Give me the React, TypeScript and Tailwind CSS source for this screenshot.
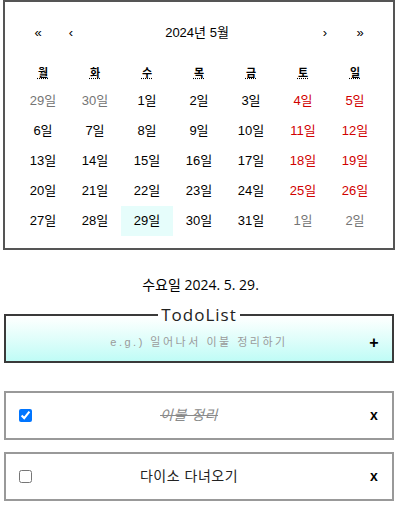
import React from "react";

const weeks: { d: string; c: "g" | "b" | "r" }[][] = [
  [
    { d: "29일", c: "g" }, { d: "30일", c: "g" }, { d: "1일", c: "b" }, { d: "2일", c: "b" }, { d: "3일", c: "b" }, { d: "4일", c: "r" }, { d: "5일", c: "r" },
  ],
  [
    { d: "6일", c: "b" }, { d: "7일", c: "b" }, { d: "8일", c: "b" }, { d: "9일", c: "b" }, { d: "10일", c: "b" }, { d: "11일", c: "r" }, { d: "12일", c: "r" },
  ],
  [
    { d: "13일", c: "b" }, { d: "14일", c: "b" }, { d: "15일", c: "b" }, { d: "16일", c: "b" }, { d: "17일", c: "b" }, { d: "18일", c: "r" }, { d: "19일", c: "r" },
  ],
  [
    { d: "20일", c: "b" }, { d: "21일", c: "b" }, { d: "22일", c: "b" }, { d: "23일", c: "b" }, { d: "24일", c: "b" }, { d: "25일", c: "r" }, { d: "26일", c: "r" },
  ],
  [
    { d: "27일", c: "b" }, { d: "28일", c: "b" }, { d: "29일", c: "b" }, { d: "30일", c: "b" }, { d: "31일", c: "b" }, { d: "1일", c: "g" }, { d: "2일", c: "g" },
  ],
];

const days = ["월", "화", "수", "목", "금", "토", "일"];

const font = { fontFamily: '"Liberation Sans", "Noto Sans CJK KR", sans-serif' };

export default function App() {
  return (
    <div className="w-[401px] min-h-[529px] bg-white text-black" style={font}>
      <div className="ml-[3px] w-[392px] h-[250px] border-2 border-[#555] px-[12px] pt-[9px]">
        <div className="flex h-[44px] items-center text-[13px]">
          <span className="w-[42px] text-center">«</span>
          <span className="w-[24px] text-center">‹</span>
          <span className="flex-1 text-center">2024년 5월</span>
          <span className="w-[28px] text-center">›</span>
          <span className="w-[42px] text-center">»</span>
        </div>
        <div className="grid grid-cols-7 h-[31px] items-center pt-[6px] text-[11px] font-bold">
          {days.map((d) => (
            <div key={d} className="text-center">
              <abbr className="underline decoration-dotted">{d}</abbr>
            </div>
          ))}
        </div>
        {weeks.map((w, i) => (
          <div key={i} className="grid grid-cols-7">
            {w.map((x, j) => (
              <div
                key={j}
                className={
                  "h-[30px] flex items-center justify-center text-[13px] " +
                  (x.c === "g" ? "text-[#757575] " : x.c === "r" ? "text-[#d10000] " : "text-black ") +
                  (i === 4 && j === 2 ? "bg-[#e6fdfb]" : "")
                }
              >
                {x.d}
              </div>
            ))}
          </div>
        ))}
      </div>

      <div
        className="mt-[24px] h-[22px] text-center text-[14px] leading-[22px]"
        style={{ fontFamily: '"Open Sans", "Noto Sans CJK KR", sans-serif' }}
      >
        수요일 2024. 5. 29.
      </div>

      <fieldset className="ml-[4px] mt-[10px] w-[390px] border-2 border-[#3a3a3a] bg-gradient-to-b from-white to-[#bffcf6]">
        <legend
          className="mx-auto px-[3px] text-[17px] leading-[18px] tracking-[1px] text-[#222]"
          style={{ fontFamily: '"Open Sans", sans-serif' }}
        >
          TodoList
        </legend>
        <div className="flex h-[37px] items-center">
          <div className="flex-1 pl-[36px] text-center text-[11px] tracking-[2.5px] text-[#9a9a9a]">
            e.g.) 일어나서 이불 정리하기
          </div>
          <span className="w-[36px] text-center text-[16px] font-bold">+</span>
        </div>
      </fieldset>

      <div className="ml-[4px] mt-[28px] w-[390px] flex flex-col gap-[12px]">
        <div className="flex h-[49px] items-center border-2 border-[#999] pl-[13px] pr-[8px]">
          <input type="checkbox" defaultChecked className="h-[13px] w-[13px] accent-[#0075ff]" />
          <span className="flex-1 pr-[18px] text-center text-[14px] italic line-through text-[#8a8a8a] tracking-[0.5px]">
            이불 정리
          </span>
          <span className="w-[20px] text-center text-[14px] font-bold">x</span>
        </div>
        <div className="flex h-[49px] items-center border-2 border-[#999] pl-[13px] pr-[8px]">
          <input type="checkbox" className="h-[13px] w-[13px]" />
          <span className="flex-1 pr-[18px] text-center text-[14px] text-[#222] tracking-[0.5px]">
            다이소 다녀오기
          </span>
          <span className="w-[20px] text-center text-[14px] font-bold">x</span>
        </div>
      </div>
    </div>
  );
}
